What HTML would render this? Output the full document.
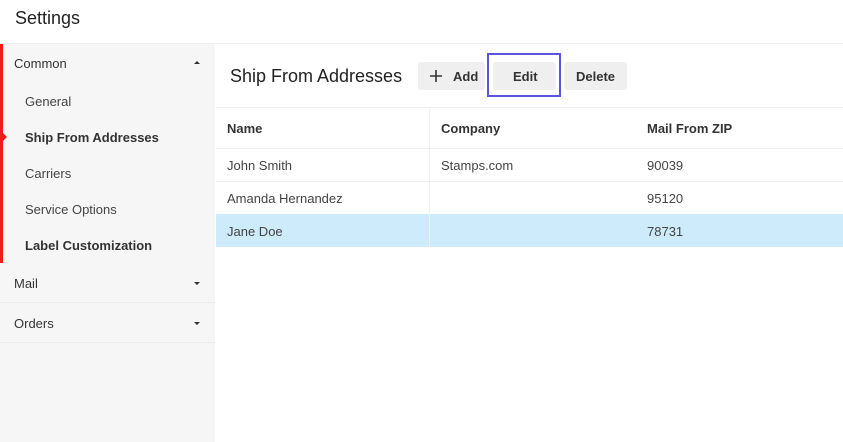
<!DOCTYPE html>
<html><head><meta charset="utf-8"><style>
*{margin:0;padding:0;box-sizing:border-box}
body{width:843px;height:442px;background:#fff;font-family:"Liberation Sans",sans-serif;color:#333;position:relative;overflow:hidden}
.a{position:absolute}
.t{font-size:13px;color:#444}
.b{font-weight:bold}
</style></head><body>
<div class="a" style="left:15px;top:8px;font-size:18px;color:#222">Settings</div>
<div class="a" style="left:0;top:43px;width:843px;height:1px;background:#eee"></div>
<div class="a" style="left:0;top:44px;width:215px;height:398px;background:#f6f6f6"></div>
<div class="a" style="left:0;top:44px;width:3px;height:219px;background:#f01c1c"></div>
<div class="a" style="left:3px;top:133px;width:0;height:0;border-left:4px solid #f01c1c;border-top:4px solid transparent;border-bottom:4px solid transparent"></div>
<div class="a t" style="left:14px;top:56px;color:#333">Common</div>
<div class="a" style="left:194px;top:61px;border-bottom:3px solid #333;border-left:3px solid transparent;border-right:3px solid transparent"></div>
<div class="a t" style="left:25px;top:94px">General</div>
<div class="a t b" style="left:25px;top:130px;color:#333">Ship From Addresses</div>
<div class="a t" style="left:25px;top:166px">Carriers</div>
<div class="a t" style="left:25px;top:202px">Service Options</div>
<div class="a t b" style="left:25px;top:238px;color:#333">Label Customization</div>
<div class="a t" style="left:14px;top:276px;color:#333">Mail</div>
<div class="a" style="left:194px;top:282px;border-top:3px solid #333;border-left:3px solid transparent;border-right:3px solid transparent"></div>
<div class="a" style="left:0;top:302px;width:215px;height:1px;background:#ececec"></div>
<div class="a t" style="left:14px;top:316px;color:#333">Orders</div>
<div class="a" style="left:194px;top:322px;border-top:3px solid #333;border-left:3px solid transparent;border-right:3px solid transparent"></div>
<div class="a" style="left:0;top:342px;width:215px;height:1px;background:#ececec"></div>

<div class="a" style="left:230px;top:66px;font-size:18px;color:#222">Ship From Addresses</div>
<div class="a" style="left:418px;top:62px;width:67px;height:28px;background:#efeff0;border-radius:3px"></div>
<svg class="a" style="left:429px;top:69px" width="14" height="14" viewBox="0 0 14 14"><path d="M7 1V13M1 7H13" stroke="#333" stroke-width="1.6"/></svg>
<div class="a t b" style="left:453px;top:69px;color:#333">Add</div>
<div class="a" style="left:487px;top:53px;width:74px;height:44px;border:2px solid #5b54e0"></div>
<div class="a" style="left:493px;top:62px;width:63px;height:28px;background:#efeff0;border-radius:3px"></div>
<div class="a t b" style="left:513px;top:69px;color:#333">Edit</div>
<div class="a" style="left:564px;top:62px;width:63px;height:28px;background:#efeff0;border-radius:3px"></div>
<div class="a t b" style="left:576px;top:69px;color:#333">Delete</div>

<div class="a" style="left:216px;top:107px;width:627px;height:1px;background:#f0f0f0"></div>
<div class="a" style="left:216px;top:148px;width:627px;height:1px;background:#f0f0f0"></div>
<div class="a" style="left:216px;top:181px;width:627px;height:1px;background:#f0f0f0"></div>
<div class="a" style="left:216px;top:214px;width:627px;height:33px;background:#cdebfb"></div>
<div class="a" style="left:429px;top:108px;width:1px;height:139px;background:#f0f0f0"></div>
<div class="a t b" style="left:227px;top:121px;color:#333">Name</div>
<div class="a t b" style="left:441px;top:121px;color:#333">Company</div>
<div class="a t b" style="left:647px;top:121px;color:#333">Mail From ZIP</div>
<div class="a t" style="left:227px;top:158px">John Smith</div>
<div class="a t" style="left:441px;top:158px">Stamps.com</div>
<div class="a t" style="left:647px;top:158px">90039</div>
<div class="a t" style="left:227px;top:191px">Amanda Hernandez</div>
<div class="a t" style="left:647px;top:191px">95120</div>
<div class="a t" style="left:227px;top:224px">Jane Doe</div>
<div class="a t" style="left:647px;top:224px">78731</div>
</body></html>
